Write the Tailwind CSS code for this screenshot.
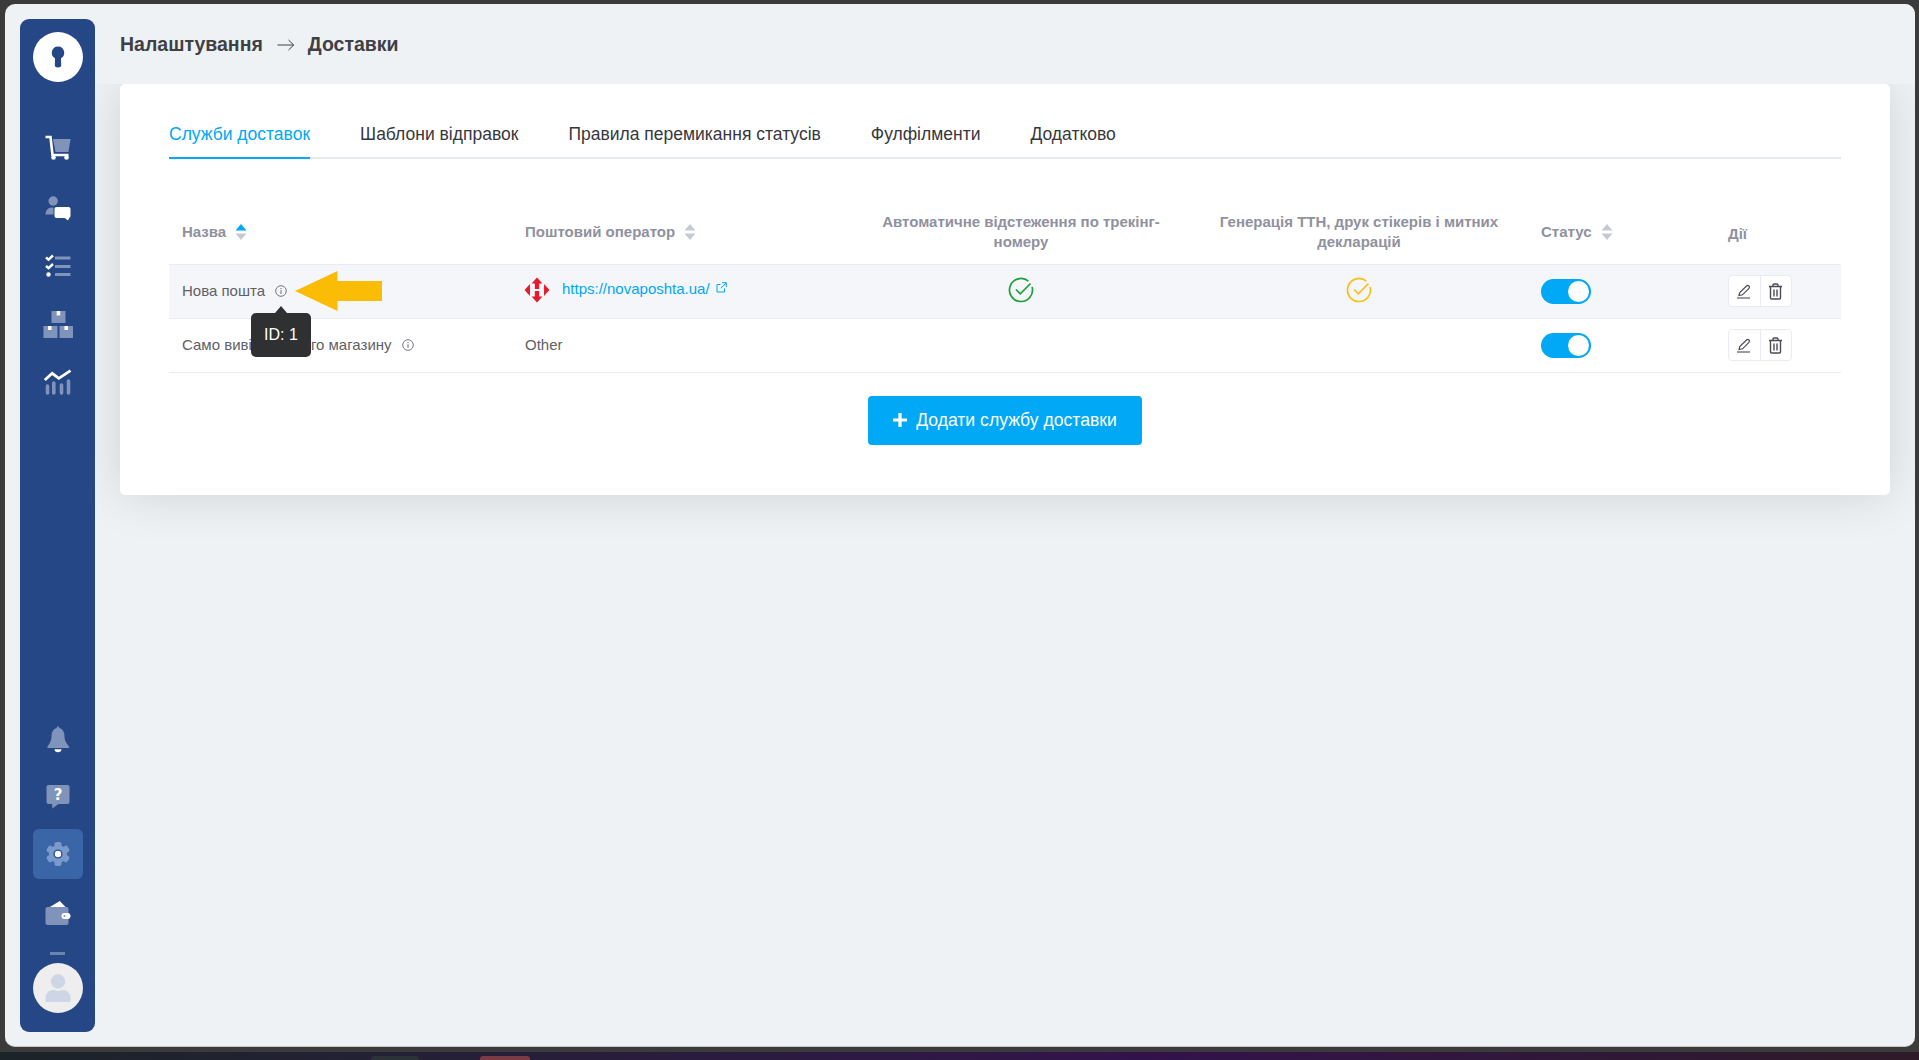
<!DOCTYPE html>
<html lang="uk">
<head>
<meta charset="utf-8">
<title>Доставки</title>
<script src="https://cdn.jsdelivr.net/npm/@tailwindcss/browser@4"></script>
</head>
<body class="m-0 overflow-hidden">
<div class="w-[1919px] h-[1060px] flex flex-col bg-[#3b3b3b] font-['Liberation_Sans',Arial,sans-serif] text-[15px]">
  <div class="h-[1052px] pt-[4px] pl-[5px] pr-[4px] pb-[5px]">
    <div class="h-full flex bg-[#eef2f5] rounded-[10px] overflow-hidden border-b border-[#c4c6c8]">
      <!-- sidebar -->
      <aside class="relative z-10 ml-[15px] mt-[15px] mb-[14px] w-[75px] bg-[#264785] rounded-[9px] flex flex-col items-center pt-[13px] pb-[19px]">
        <div class="w-[50px] h-[50px] rounded-full bg-white flex items-center justify-center">
          <svg width="20" height="24" viewBox="0 0 20 24"><path d="M10 1.500a6.300 6.300 0 0 0-3 11.800l-.2 7.200c0 1.300 1.300 2 3.200 2s3.200-.7 3.200-2L13 13.300A6.300 6.300 0 0 0 10 1.500z" fill="#264785"/></svg>
        </div>
        <nav class="mt-[41px] flex flex-col gap-[8.5px]">
          <a class="w-[50px] h-[50px] flex items-center justify-center">
            <svg width="30" height="30" viewBox="0 0 30 30"><path d="M10 6h17.500l-2 13H12.500z" fill="#8093bb"/><path d="M2.500 4h5l2 18h16" fill="none" stroke="#fff" stroke-width="2.600"/><circle cx="10.500" cy="24.500" r="2.300" fill="#fff"/><circle cx="23.500" cy="24.500" r="2.300" fill="#fff"/></svg>
          </a>
          <a class="w-[50px] h-[50px] flex items-center justify-center">
            <svg width="30" height="30" viewBox="0 0 30 30"><circle cx="10.200" cy="9" r="4.700" fill="#8093bb"/><path d="M2.500 22.500c0-4 2.500-7 6-7h2v7z" fill="#8093bb"/><rect x="11.500" y="15" width="16" height="11" rx="2" fill="#fff"/><path d="M21 25.500h5.500l-1.500 3z" fill="#fff"/></svg>
          </a>
          <a class="w-[50px] h-[50px] flex items-center justify-center">
            <svg width="30" height="30" viewBox="0 0 30 30"><path d="M12 8h15.500M12 16.500h15.500M12 24.500h15.500" stroke="#8093bb" stroke-width="3" fill="none"/><path d="M3 7.500l2.500 2.200L10 5.500M3 16l2.500 2.200L10 14" stroke="#fff" stroke-width="2.400" fill="none"/><circle cx="5.500" cy="24.500" r="2.200" fill="#fff"/></svg>
          </a>
          <a class="w-[50px] h-[50px] flex items-center justify-center">
            <svg width="30" height="30" viewBox="0 0 30 30"><rect x="8.500" y="2" width="14" height="12" fill="#8093bb"/><rect x="13.700" y="2" width="3.500" height="4.500" fill="#fff"/><rect x=".5" y="17" width="14" height="12" fill="#8093bb"/><rect x="5" y="17" width="3.500" height="4" fill="#fff"/><rect x="16.500" y="17" width="13.500" height="12" fill="#8093bb"/><rect x="21.500" y="17" width="3.500" height="4" fill="#fff"/></svg>
          </a>
          <a class="w-[50px] h-[50px] flex items-center justify-center">
            <svg width="30" height="30" viewBox="0 0 30 30"><path d="M4.500 26v-7M10.800 26V16M18.500 26v-8M25.500 26V14" stroke="#8093bb" stroke-width="3.600" stroke-linecap="round" fill="none"/><path d="M1.800 13l7.400-6.700 6.600 5L27.500 3.700" stroke="#fff" stroke-width="2.800" fill="none"/></svg>
          </a>
        </nav>
        <div class="mt-auto flex flex-col items-center gap-[9px]">
          <a class="w-[50px] h-[44px] flex items-center justify-center">
            <svg width="30" height="30" viewBox="0 0 30 30"><path d="M15 2.500c1 0 1.300.7 1.300 1.500 3.500 1 5.200 4 5.200 8 0 5 2 7 4.500 10.500.5.800 0 1.500-1 1.500H5.500c-1 0-1.500-.7-1-1.500C7 19 8.500 17 8.500 12c0-4 1.700-7 5.200-8 0-.8.3-1.500 1.300-1.500z" fill="#8093bb"/><path d="M11.500 25.300h7c0 2-1.500 3-3.500 3s-3.500-1-3.500-3z" fill="#fff"/></svg>
          </a>
          <a class="w-[50px] h-[50px] flex items-center justify-center">
            <svg width="30" height="30" viewBox="0 0 30 30"><rect x="3.500" y="5" width="23" height="19" rx="2" fill="#8093bb"/><path d="M9 23.500h7l-6.500 5z" fill="#8093bb"/><text x="15" y="20" text-anchor="middle" font-family="DejaVu Sans" font-weight="700" font-size="15" fill="#fff">?</text></svg>
          </a>
          <a class="w-[50px] h-[50px] rounded-[6px] bg-[#3a66a8] flex items-center justify-center">
            <svg width="30" height="30" viewBox="0 0 30 30"><g fill="#7b9acc"><rect x="11.500" y="3" width="7" height="24" rx="2"/><rect x="11.500" y="3" width="7" height="24" rx="2" transform="rotate(60 15 15)"/><rect x="11.500" y="3" width="7" height="24" rx="2" transform="rotate(120 15 15)"/><circle cx="15" cy="15" r="9"/></g><circle cx="15" cy="15" r="4.600" fill="#264f9c"/><circle cx="15" cy="15" r="3.200" fill="#fff"/></svg>
          </a>
          <a class="w-[50px] h-[50px] flex items-center justify-center">
            <svg width="30" height="30" viewBox="0 0 30 30"><path d="M6.800 9l10-6 5.700 6z" fill="#fff"/><rect x="2.500" y="9" width="23" height="18" rx="2" fill="#8093bb"/><rect x="18.500" y="15" width="9" height="6" rx="3" fill="#fff"/><circle cx="21.500" cy="18" r="1" fill="#8093bb"/></svg>
          </a>
          <div class="mt-[5px] w-[15px] h-[3px] bg-[#6b83b1]"></div>
          <div class="-mt-[1px] w-[50px] h-[50px] rounded-full bg-[#eeeeee] flex items-center justify-center">
            <svg width="30" height="30" viewBox="0 0 30 30"><circle cx="15" cy="8.500" r="7.200" fill="#ced6e5"/><path d="M2.500 30v-4.500c0-5 4-7.500 8-7.500 1.500 0 3 1 4.500 1s3-1 4.500-1c4 0 8 2.500 8 7.500V30z" fill="#ced6e5" transform="translate(0 -1)"/></svg>
          </div>
        </div>
      </aside>
      <!-- main -->
      <main class="flex-1 flex flex-col min-w-0">
        <header class="relative z-[5] h-[80px] pl-[25px] pt-[2px] bg-[#eef2f5] flex items-center text-[19.5px] font-bold text-[#413f46]">
          <span>Налаштування</span>
          <svg class="ml-[14px] mr-[13px]" width="18" height="14" viewBox="0 0 18 14"><path d="M.5 7h16M11.500 2 16.800 7 11.500 12" fill="none" stroke="#413f46" stroke-width="1"/></svg>
          <span>Доставки</span>
        </header>
        <section class="mr-[25px] ml-[25px] bg-white rounded-[5px] shadow-[0_0_50px_rgba(0,0,0,0.13)] pt-[38px] px-[49px] pb-[50px]">
          <div class="flex gap-[50px] border-b-2 border-[#e5e8ec] text-[17.500px] text-[#37373d]">
            <a class="-mb-[2px] pb-[11px] leading-[24px] border-b-2 border-[#00a8f5] text-[#00a8f5]">Служби доставок</a>
            <a class="leading-[24px]">Шаблони відправок</a>
            <a class="leading-[24px]">Правила перемикання статусів</a>
            <a class="leading-[24px]">Фулфілменти</a>
            <a class="leading-[24px]">Додатково</a>
          </div>
          <table class="mt-[41px] w-[1672px] table-fixed border-collapse">
            <thead>
              <tr class="h-[64px] border-b border-[#e9ecf2] text-[#8f919e] font-bold leading-[20px]">
                <th class="w-[343px] px-[13px] text-left font-bold">
                  <span class="inline-flex items-center gap-[9px]">Назва
                    <svg width="12" height="16" viewBox="0 0 12 16"><path d="M6 0l5.500 6.500H.5z" fill="#00a8f5"/><path d="M6 16l5.500-6.500H.5z" fill="#c6c9d1"/></svg>
                  </span>
                </th>
                <th class="w-[340px] px-[13px] text-left font-bold">
                  <span class="inline-flex items-center gap-[9px]">Поштовий оператор
                    <svg width="12" height="16" viewBox="0 0 12 16"><path d="M6 0l5.500 6.500H.5z" fill="#c6c9d1"/><path d="M6 16l5.500-6.500H.5z" fill="#c6c9d1"/></svg>
                  </span>
                </th>
                <th class="w-[338px] px-[13px] text-center font-bold">Автоматичне відстеження по трекінг-номеру</th>
                <th class="w-[338px] px-[13px] text-center font-bold">Генерація ТТН, друк стікерів і митних декларацій</th>
                <th class="w-[187px] px-[13px] text-left font-bold">
                  <span class="inline-flex items-center gap-[9px]">Статус
                    <svg width="12" height="16" viewBox="0 0 12 16"><path d="M6 0l5.500 6.500H.5z" fill="#c6c9d1"/><path d="M6 16l5.500-6.500H.5z" fill="#c6c9d1"/></svg>
                  </span>
                </th>
                <th class="w-[126px] px-[13px] pt-[4px] text-left font-bold">Дії</th>
              </tr>
            </thead>
            <tbody class="text-[#5f5f66]">
              <tr class="h-[54px] bg-[#f4f6fa] border-b border-[#e9ecf2]">
                <td class="px-[13px]">
                  <span class="inline-flex items-center gap-[10px]">Нова пошта
                    <svg width="12" height="12" viewBox="0 0 12 12"><circle cx="6" cy="6" r="5.300" fill="none" stroke="#77777e"/><path d="M6 5.200V9M6 3v1.200" stroke="#77777e" stroke-width="1.100"/></svg>
                  </span>
                </td>
                <td class="px-[13px] pt-[3px]">
                  <span class="inline-flex items-center">
                    <svg class="-ml-[1px] mt-[1px]" width="26" height="26" viewBox="0 0 24 24"><g fill="#e8192c"><path d="M.5 12l5-5.500v11zM23.500 12l-5-5.500v11z"/><path d="M12 .5l5 5.500h-3v5h-4V6H7zM12 23.500l5-5.500h-3v-5h-4v5H7z"/></g></svg>
                    <a class="ml-[12px] text-[#00a8f5]">https://novaposhta.ua/</a>
                    <svg class="ml-[6px] -mt-[4px]" width="11" height="11" viewBox="0 0 11 11"><path d="M8.500 6.500V10H1V2.500h3.500M6 .7h4.300V5M10 1 4.800 6.200" fill="none" stroke="#00a8f5"/></svg>
                  </span>
                </td>
                <td class="text-center">
                  <svg class="inline-block -mt-[3px]" width="26" height="26" viewBox="0 0 26 26"><path d="M20.400 4.200A11.500 11.500 0 1 0 24.100 10" fill="none" stroke="#1c9f3b" stroke-width="1.700"/><path d="M8 12.500l4.300 4.300L22.500 6.500" fill="none" stroke="#1c9f3b" stroke-width="1.700"/></svg>
                </td>
                <td class="text-center">
                  <svg class="inline-block -mt-[3px]" width="26" height="26" viewBox="0 0 26 26"><path d="M20.400 4.200A11.500 11.500 0 1 0 24.100 10" fill="none" stroke="#fcbd14" stroke-width="1.700"/><path d="M8 12.500l4.300 4.300L22.500 6.500" fill="none" stroke="#fcbd14" stroke-width="1.700"/></svg>
                </td>
                <td class="px-[13px]">
                  <div class="w-[50px] h-[25px] rounded-full bg-[#00a8f5] flex items-center justify-end pr-[2px]"><div class="w-[21px] h-[21px] rounded-full bg-white"></div></div>
                </td>
                <td class="px-[13px]">
                  <div class="w-[64px] h-[32px] flex bg-white border border-[#e9ebf0] rounded-[4px] divide-x divide-[#e9ebf0]">
                    <span class="flex-1 flex items-center justify-center"><svg width="14" height="15" viewBox="0 0 14 15"><path d="M0 14h13" stroke="#4b4b55" stroke-width="1.100"/><path d="M2 11.500l.8-3L9.500 2c.7-.7 1.700-.7 2.500 0 .6.700.6 1.700 0 2.300L5.500 10.800z" fill="none" stroke="#4b4b55" stroke-width="1.200"/></svg></span>
                    <span class="flex-1 flex items-center justify-center"><svg width="15" height="17" viewBox="0 0 15 17"><path d="M1 3.500h13M5 3.500V2q0-1 1-1h3q1 0 1 1v1.500M2.500 3.500V15q0 1 1 1h8q1 0 1-1V3.500M6 6.500v7M9 6.500v7" fill="none" stroke="#4b4b55" stroke-width="1.400"/></svg></span>
                  </div>
                </td>
              </tr>
              <tr class="h-[54px] border-b border-[#e9ecf2]">
                <td class="px-[13px]">
                  <span class="inline-flex items-center gap-[10px]">Само вивіз з нашого магазину
                    <svg width="12" height="12" viewBox="0 0 12 12"><circle cx="6" cy="6" r="5.300" fill="none" stroke="#77777e"/><path d="M6 5.200V9M6 3v1.200" stroke="#77777e" stroke-width="1.100"/></svg>
                  </span>
                </td>
                <td class="px-[13px]">Other</td>
                <td></td>
                <td></td>
                <td class="px-[13px]">
                  <div class="w-[50px] h-[25px] rounded-full bg-[#00a8f5] flex items-center justify-end pr-[2px]"><div class="w-[21px] h-[21px] rounded-full bg-white"></div></div>
                </td>
                <td class="px-[13px]">
                  <div class="w-[64px] h-[32px] flex bg-white border border-[#e9ebf0] rounded-[4px] divide-x divide-[#e9ebf0]">
                    <span class="flex-1 flex items-center justify-center"><svg width="14" height="15" viewBox="0 0 14 15"><path d="M0 14h13" stroke="#4b4b55" stroke-width="1.100"/><path d="M2 11.500l.8-3L9.500 2c.7-.7 1.700-.7 2.500 0 .6.700.6 1.700 0 2.300L5.500 10.800z" fill="none" stroke="#4b4b55" stroke-width="1.200"/></svg></span>
                    <span class="flex-1 flex items-center justify-center"><svg width="15" height="17" viewBox="0 0 15 17"><path d="M1 3.500h13M5 3.500V2q0-1 1-1h3q1 0 1 1v1.500M2.500 3.500V15q0 1 1 1h8q1 0 1-1V3.500M6 6.500v7M9 6.500v7" fill="none" stroke="#4b4b55" stroke-width="1.400"/></svg></span>
                  </div>
                </td>
              </tr>
            </tbody>
          </table>
          <div class="mt-[23px] flex justify-center">
            <button class="w-[274px] h-[49px] rounded-[4px] bg-[#00a8f5] text-white text-[17.600px] flex items-center justify-center gap-[9px]">
              <svg width="14" height="14" viewBox="0 0 14 14"><path d="M7 0v14M0 7h14" stroke="#fff" stroke-width="3.200"/></svg>
              Додати службу доставки
            </button>
          </div>
        </section>
      </main>
    </div>
  </div>
  <!-- desktop strip -->
  <div class="h-[8px] flex items-end pl-[371px] gap-[61px] bg-gradient-to-r from-[#1b2429] via-[#33124c] via-60% to-[#2e1a28]">
    <div class="w-[48px] h-[4px] rounded-t-[3px] bg-[#2c3338]"></div>
    <div class="w-[50px] h-[4px] rounded-t-[3px] bg-[#7a3b45]"></div>
  </div>
  <!-- annotation overlays -->
  <svg class="absolute left-[294px] top-[270px] z-20" width="89" height="42" viewBox="0 0 89 42"><path d="M1 21 43.500 1v10H88v20H43.500v10z" fill="#fbbc05"/></svg>
  <div class="absolute left-[251px] top-[313px] z-20 w-[60px] h-[44px] rounded-[5px] bg-[#2f3032] text-white text-[16px] flex items-center justify-center">
    ID: 1
    <span class="absolute -top-[7px] left-[24px] w-0 h-0 border-x-[6px] border-x-transparent border-b-[7px] border-b-[#2f3032]"></span>
  </div>
</div>
</body>
</html>
